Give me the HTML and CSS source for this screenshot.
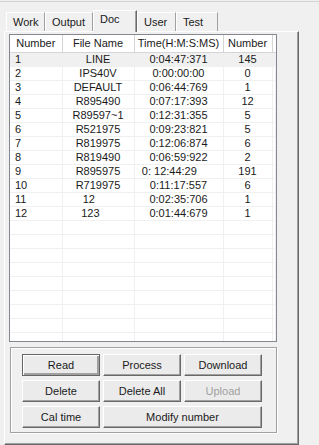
FILE: index.html
```html
<!DOCTYPE html>
<html lang="en">
  <head>
    <meta charset="UTF-8" />
    <title>Doc</title>
    <link rel="stylesheet" href="styles.css">
  </head>
  <body>
    <div class="window">
      <div class="tabs">
        <div class="tab">Work</div>
        <div class="tab">Output</div>
        <div class="tab active">Doc</div>
        <div class="tab">User</div>
        <div class="tab">Test</div>
      </div>

      <div class="panel">
        <div class="list">
          <table class="grid">
            <colgroup>
              <col class="c-num" /><col class="c-name" /><col class="c-time" /><col class="c-count" /><col />
            </colgroup>
            <thead>
              <tr>
                <th>Number</th><th>File Name</th><th>Time(H:M:S:MS)</th><th>Number</th><th class="fill"></th>
              </tr>
            </thead>
            <tbody>
              <tr class="sel"><td class="left">1</td><td>LINE</td><td>0:04:47:371</td><td>145</td><td></td></tr>
              <tr><td class="left">2</td><td>IPS40V</td><td>0:00:00:00</td><td>0</td><td></td></tr>
              <tr><td class="left">3</td><td>DEFAULT</td><td>0:06:44:769</td><td>1</td><td></td></tr>
              <tr><td class="left">4</td><td>R895490</td><td>0:07:17:393</td><td>12</td><td></td></tr>
              <tr><td class="left">5</td><td>R89597~1</td><td>0:12:31:355</td><td>5</td><td></td></tr>
              <tr><td class="left">6</td><td>R521975</td><td>0:09:23:821</td><td>5</td><td></td></tr>
              <tr><td class="left">7</td><td>R819975</td><td>0:12:06:874</td><td>6</td><td></td></tr>
              <tr><td class="left">8</td><td>R819490</td><td>0:06:59:922</td><td>2</td><td></td></tr>
              <tr><td class="left">9</td><td>R895975</td><td class="pre">0: 12:44:29      </td><td>191</td><td></td></tr>
              <tr><td class="left">10</td><td>R719975</td><td>0:11:17:557</td><td>6</td><td></td></tr>
              <tr><td class="left">11</td><td class="pre">12      </td><td>0:02:35:706</td><td>1</td><td></td></tr>
              <tr><td class="left">12</td><td class="pre">123     </td><td>0:01:44:679</td><td>1</td><td></td></tr>
              <tr><td></td><td></td><td></td><td></td><td></td></tr>
              <tr><td></td><td></td><td></td><td></td><td></td></tr>
              <tr><td></td><td></td><td></td><td></td><td></td></tr>
              <tr><td></td><td></td><td></td><td></td><td></td></tr>
              <tr><td></td><td></td><td></td><td></td><td></td></tr>
              <tr><td></td><td></td><td></td><td></td><td></td></tr>
              <tr><td></td><td></td><td></td><td></td><td></td></tr>
              <tr><td></td><td></td><td></td><td></td><td></td></tr>
              <tr><td></td><td></td><td></td><td></td><td></td></tr>
            </tbody>
          </table>
        </div>

        <div class="group">
          <button class="btn default">Read</button>
          <button class="btn">Process</button>
          <button class="btn">Download</button>
          <button class="btn">Delete</button>
          <button class="btn">Delete All</button>
          <button class="btn" disabled>Upload</button>
          <button class="btn">Cal time</button>
          <button class="btn wide">Modify number</button>
        </div>
      </div>
    </div>
  </body>
</html>
```

FILE: styles.css
```css
/* base */
html,
body {
  margin: 0;
  padding: 0;
}

body {
  width: 319px;
  height: 445px;
  overflow: hidden;
  background: #f0f0f0;
  font-family: "Liberation Sans", Arial, sans-serif;
  font-size: 11px;
  color: #1a1a1a;
}

.window {
  border-top: 1px solid #d4d4d4;
  margin-top: 1px;
}

/* tab strip */
.tabs {
  display: flex;
  align-items: flex-end;
  margin: 8px 0 0 6px;
  height: 21px;
  position: relative;
  z-index: 2;
}

.tab {
  height: 19px;
  line-height: 18px;
  padding: 0 6px;
  border: 1px solid #fff;
  border-right-color: #a0a0a0;
  border-bottom: none;
  box-sizing: border-box;
  background: #f0f0f0;
}

.tab:nth-child(1) { width: 39px; }
.tab:nth-child(2) { width: 48px; }
.tab:nth-child(3) { width: 44px; }
.tab:nth-child(4) { width: 39px; }
.tab:nth-child(5) { width: 42px; }

.tab.active {
  height: 22px;
  line-height: 17px;
  margin-bottom: -1px;
  border-right-color: #696969;
  box-shadow: inset -1px 0 #a0a0a0;
}

/* panel */
.panel {
  margin-left: 4px;
  width: 295px;
  height: 414px;
  box-sizing: border-box;
  border: 1px solid;
  border-color: #fff #696969 #696969 #fff;
  box-shadow: inset -1px -1px #a0a0a0;
  padding: 2px 0 0 4px;
  position: relative;
  z-index: 1;
}

/* list view */
.list {
  width: 268px;
  height: 308px;
  box-sizing: border-box;
  border: 1px solid #828790;
  background: #fff;
  overflow: hidden;
}

.grid {
  border-collapse: collapse;
  table-layout: fixed;
  width: 266px;
}

.c-num { width: 52px; }
.c-name { width: 72px; }
.c-time { width: 89px; }
.c-count { width: 49px; }

.grid th {
  height: 17px;
  padding: 0;
  font-weight: normal;
  text-align: center;
  background: #fff;
  border-right: 1px solid #d5d5d5;
  border-bottom: 1px solid #d5d5d5;
  box-sizing: border-box;
}

.grid th.fill {
  border-right: none;
}

.grid td {
  height: 14px;
  padding: 0;
  line-height: 13px;
  text-align: center;
  white-space: nowrap;
  overflow: hidden;
  border-right: 1px solid #f0f0f0;
  border-bottom: 1px solid #f0f0f0;
  box-sizing: border-box;
}

.grid td.left {
  text-align: left;
  padding-left: 5px;
}

.grid td.pre {
  white-space: pre;
}

.grid tr.sel td {
  background: #f0f0f0;
}

/* button group */
.group {
  margin: 5px 0 0 1px;
  width: 267px;
  height: 86px;
  box-sizing: border-box;
  border: 1px solid #a0a0a0;
  box-shadow: inset 1px 1px #fff, 1px 1px #fff;
  padding: 6px 0 0 11px;
  display: grid;
  grid-template-columns: 78px 78px 78px;
  grid-auto-rows: 22px;
  gap: 4px 3px;
}

.btn {
  font-family: inherit;
  font-size: 11px;
  color: #1a1a1a;
  background: #ebebeb;
  border: 1px solid;
  border-color: #fff #696969 #696969 #fff;
  box-shadow: inset -1px -1px #a0a0a0;
  padding: 0;
  margin: 0;
}

.btn.default {
  border-color: #646464;
  box-shadow: inset 1px 1px #fff, inset -2px -2px #a0a0a0;
}

.btn.wide {
  grid-column: span 2;
}

.btn:disabled {
  color: #a0a0a0;
}
```
